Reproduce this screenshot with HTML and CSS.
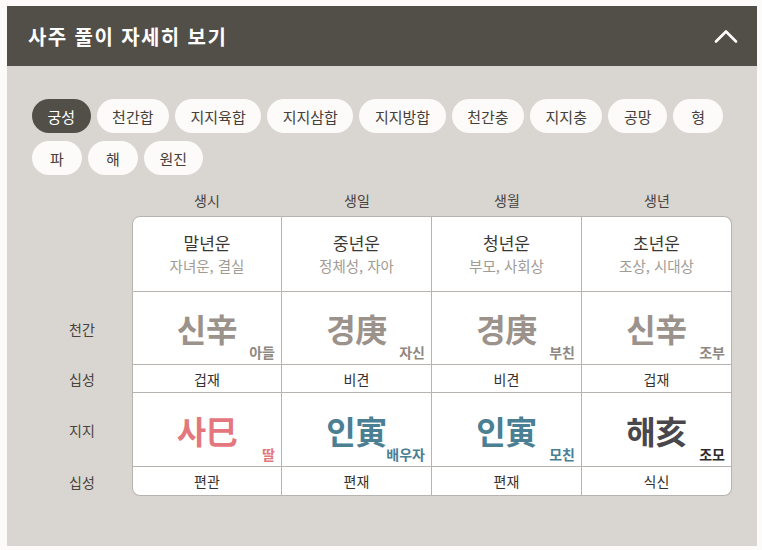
FILE: index.html
```html
<!DOCTYPE html>
<html lang="ko">
<head>
<meta charset="utf-8">
<link rel="stylesheet" href="styles.css">
</head>
<body>
<section class="panel">
  <header class="panel-head">
    <h2 class="panel-title">사주 풀이 자세히 보기</h2>
    <svg class="chevron" width="24" height="14" viewBox="0 0 24 14"><polyline points="2,12.5 12,2.5 22,12.5" fill="none" stroke="#fff" stroke-width="2.6" stroke-linecap="round" stroke-linejoin="round"/></svg>
  </header>
  <div class="panel-body">
    <div class="chips">
      <span class="chip active">궁성</span>
      <span class="chip">천간합</span>
      <span class="chip">지지육합</span>
      <span class="chip">지지삼합</span>
      <span class="chip">지지방합</span>
      <span class="chip">천간충</span>
      <span class="chip">지지충</span>
      <span class="chip">공망</span>
      <span class="chip">형</span>
      <span class="chip">파</span>
      <span class="chip">해</span>
      <span class="chip">원진</span>
    </div>

    <div class="grid">
      <div class="colhead blank"></div>
      <div class="colhead">생시</div>
      <div class="colhead">생일</div>
      <div class="colhead">생월</div>
      <div class="colhead">생년</div>

      <div class="rowhead"></div>
      <div class="cell r1 first tl"><div class="ttl">말년운</div><div class="sub">자녀운, 결실</div></div>
      <div class="cell r1"><div class="ttl">중년운</div><div class="sub">정체성, 자아</div></div>
      <div class="cell r1"><div class="ttl">청년운</div><div class="sub">부모, 사회상</div></div>
      <div class="cell r1 tr"><div class="ttl">초년운</div><div class="sub">조상, 시대상</div></div>

      <div class="rowhead">천간</div>
      <div class="cell big first gray"><span class="glyph">신辛</span><span class="tag">아들</span></div>
      <div class="cell big gray"><span class="glyph">경庚</span><span class="tag">자신</span></div>
      <div class="cell big gray"><span class="glyph">경庚</span><span class="tag">부친</span></div>
      <div class="cell big gray"><span class="glyph">신辛</span><span class="tag">조부</span></div>

      <div class="rowhead">십성</div>
      <div class="cell small first">겁재</div>
      <div class="cell small">비견</div>
      <div class="cell small">비견</div>
      <div class="cell small">겁재</div>

      <div class="rowhead">지지</div>
      <div class="cell big first pink"><span class="glyph">사巳</span><span class="tag">딸</span></div>
      <div class="cell big teal"><span class="glyph">인寅</span><span class="tag">배우자</span></div>
      <div class="cell big teal"><span class="glyph">인寅</span><span class="tag">모친</span></div>
      <div class="cell big dark"><span class="glyph">해亥</span><span class="tag">조모</span></div>

      <div class="rowhead">십성</div>
      <div class="cell small last first bl">편관</div>
      <div class="cell small last">편재</div>
      <div class="cell small last">편재</div>
      <div class="cell small last br">식신</div>
    </div>
  </div>
</section>
</body>
</html>
```

FILE: styles.css
```css
* { box-sizing: border-box; }
html, body { margin: 0; padding: 0; }
body {
  background: #fcfbf9;
  font-family: "Noto Sans CJK KR", "Noto Sans", sans-serif;
  color: #3d3935;
}
.panel {
  margin: 6px 5px 0 7px;
  width: 750px;
}
.panel-head {
  height: 60px;
  background: #524e48;
  display: flex;
  align-items: center;
  justify-content: space-between;
  padding: 0 19px 0 21px;
}
.panel-title {
  margin: 0;
  color: #fff;
  font-size: 20px;
  font-weight: 700;
  letter-spacing: 1.4px;
}
.chevron { display: block; margin-top: -1px; }
.panel-body {
  background: #d9d6d1;
  padding: 33px 25px 50px 25px;
}
.chips {
  display: flex;
  flex-wrap: wrap;
  gap: 8px 6px;
}
.chip {
  height: 34px;
  min-width: 50px;
  padding: 0 15.5px;
  border-radius: 17px;
  background: #fcfbf9;
  color: #45403b;
  font-size: 15px;
  display: flex;
  align-items: center;
  justify-content: center;
}
.chip.active {
  background: #524e48;
  color: #fff;
}
.grid {
  margin-top: 9px;
  display: grid;
  grid-template-columns: 100px repeat(4, 150px);
  grid-template-rows: 32px 76px 73px 28px 74px 29px;
}
.colhead {
  display: flex;
  align-items: center;
  justify-content: center;
  font-size: 14px;
  color: #47423d;
  padding-bottom: 1px;
}
.rowhead {
  display: flex;
  align-items: center;
  justify-content: center;
  font-size: 14px;
  color: #47423d;
}
.cell {
  background: #fff;
  border-right: 1px solid #b8b3ae;
  border-bottom: 1px solid #b8b3ae;
  display: flex;
  flex-direction: column;
  align-items: center;
  justify-content: center;
  position: relative;
}
.cell.first { border-left: 1px solid #b8b3ae; }
.cell.r1 { border-top: 1px solid #b8b3ae; }
.cell.tl { border-top-left-radius: 8px; }
.cell.tr { border-top-right-radius: 8px; }
.cell.bl { border-bottom-left-radius: 8px; }
.cell.br { border-bottom-right-radius: 8px; }
.ttl {
  font-size: 17px;
  color: #3b3733;
  line-height: 24px;
}
.sub {
  font-size: 14.5px;
  color: #a19b95;
  line-height: 22px;
}
.small {
  font-size: 14px;
  color: #35312e;
}
.glyph {
  font-size: 32px;
  font-weight: 700;
  line-height: 40px;
  letter-spacing: -0.5px;
}
.tag {
  position: absolute;
  right: 6px;
  bottom: 3px;
  font-size: 14px;
  font-weight: 700;
  line-height: 18px;
}
.gray { color: #9b928b; }
.gray .tag { color: #8f8882; }
.pink { color: #e4777d; }
.teal { color: #4a7f94; }
.dark { color: #4a474c; }
.dark .tag { color: #2f2c2c; }
```
